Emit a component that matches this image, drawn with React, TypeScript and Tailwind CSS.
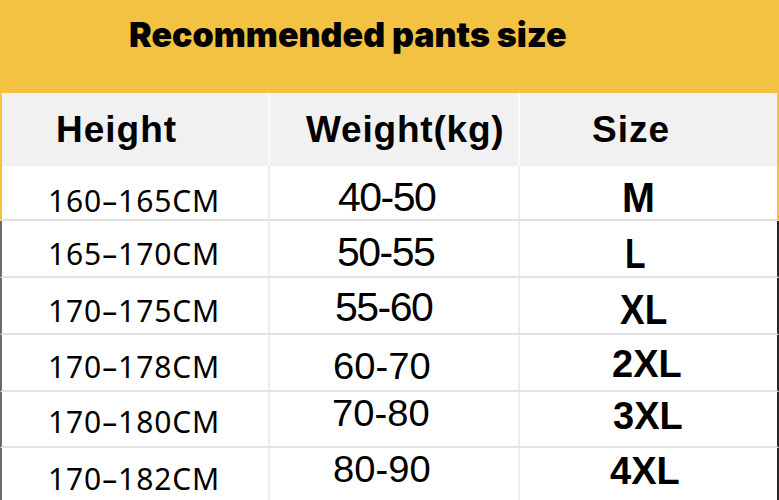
import React from "react";

type Row = {
  h: string;
  edge: string;
  c1: string;
  c1pt: string;
  c2pad: string;
  c2: string;
  c2cls: string;
  c3pad: string;
  c3: string;
  c3cls: string;
};

const rows: Row[] = [
  {
    h: "h-[55px]",
    edge: "border-l-2 border-r-2 border-l-[#f4c242] border-r-[#f4c242]",
    c1: "160–165CM",
    c1pt: "pt-[20px]",
    c2pad: "pl-[68px] pt-[11px]",
    c2: "40-50",
    c2cls: "text-[41px] tracking-[-1.5px]",
    c3pad: "pl-[102px] pt-[10px]",
    c3: "M",
    c3cls: "text-[43px] scale-x-[0.92]",
  },
  {
    h: "h-[57px]",
    edge: "border-l-2 border-r-2 border-l-[#6b6b6b] border-r-[#2a2a2a]",
    c1: "165–170CM",
    c1pt: "pt-[18px]",
    c2pad: "pl-[67px] pt-[11px]",
    c2: "50-55",
    c2cls: "text-[41px] tracking-[-1.5px]",
    c3pad: "pl-[105px] pt-[12px]",
    c3: "L",
    c3cls: "text-[42px] scale-x-[0.8]",
  },
  {
    h: "h-[57px]",
    edge: "border-l-2 border-r-2 border-l-[#6b6b6b] border-r-[#2a2a2a]",
    c1: "170–175CM",
    c1pt: "pt-[18px]",
    c2pad: "pl-[65px] pt-[9px]",
    c2: "55-60",
    c2cls: "text-[41px] tracking-[-1.5px]",
    c3pad: "pl-[100px] pt-[11px]",
    c3: "XL",
    c3cls: "text-[42px] scale-x-[0.88]",
  },
  {
    h: "h-[57px]",
    edge: "border-l-2 border-r-2 border-l-[#6b6b6b] border-r-[#2a2a2a]",
    c1: "170–178CM",
    c1pt: "pt-[17px]",
    c2pad: "pl-[63px] pt-[14px]",
    c2: "60-70",
    c2cls: "text-[36px] scale-x-[1.06]",
    c3pad: "pl-[92px] pt-[10px]",
    c3: "2XL",
    c3cls: "text-[38px]",
  },
  {
    h: "h-[56px]",
    edge: "border-l-2 border-r-2 border-l-[#6b6b6b] border-r-[#2a2a2a]",
    c1: "170–180CM",
    c1pt: "pt-[15px]",
    c2pad: "pl-[62px] pt-[4px]",
    c2: "70-80",
    c2cls: "text-[36px] scale-x-[1.06]",
    c3pad: "pl-[93px] pt-[5px]",
    c3: "3XL",
    c3cls: "text-[38px]",
  },
  {
    h: "h-[56px]",
    edge: "border-l-2 border-r-2 border-l-[#6b6b6b] border-r-[#2a2a2a]",
    c1: "170–182CM",
    c1pt: "pt-[16px]",
    c2pad: "pl-[63px] pt-[4px]",
    c2: "80-90",
    c2cls: "text-[36px] scale-x-[1.06]",
    c3pad: "pl-[90px] pt-[4px]",
    c3: "4XL",
    c3cls: "text-[38px]",
  },
];

export default function App() {
  return (
    <div className="w-[779px] h-[500px] overflow-hidden bg-[#f4c242] flex flex-col">
      <div className="h-[93px] shrink-0 pl-[129px] pt-[18px]">
        <div className="font-['Inter',sans-serif] font-black text-[34px] leading-none text-black">
          Recommended pants size
        </div>
      </div>

      <div className="flex flex-col">
        {/* header */}
        <div className="h-[73px] shrink-0 flex border-l-2 border-r-2 border-[#f4c242] bg-white">
          <div className="w-[268px] shrink-0 border-r-2 border-r-[#fafafa] bg-[#f1f1f1] rounded-tl-[4px] pl-[54px] pt-[18px]">
            <span className="font-['Liberation_Sans',Arial,sans-serif] font-bold text-[37px] leading-none tracking-[1px] text-black block">
              Height
            </span>
          </div>
          <div className="w-[250px] shrink-0 border-r-2 border-r-[#fafafa] bg-[#f1f1f1] pl-[36px] pt-[18px]">
            <span className="font-['Liberation_Sans',Arial,sans-serif] font-bold text-[37px] leading-none tracking-[0.8px] text-black block">
              Weight(kg)
            </span>
          </div>
          <div className="flex-1 bg-[#f1f1f1] rounded-tr-[4px] pl-[72px] pt-[18px]">
            <span className="font-['Liberation_Sans',Arial,sans-serif] font-bold text-[37px] leading-none tracking-[1px] text-black block">
              Size
            </span>
          </div>
        </div>

        {rows.map((r, i) => (
          <div
            key={i}
            className={`${r.h} shrink-0 flex bg-white border-b-2 border-b-[#e2e2e2] ${r.edge}`}
          >
            <div className={`w-[268px] shrink-0 border-r-2 border-r-[#ededed] pl-[46px] ${r.c1pt}`}>
              <span className="block font-['Noto_Sans',sans-serif] text-[30px] leading-none tracking-[0.9px] text-black">
                {r.c1}
              </span>
            </div>
            <div className={`w-[250px] shrink-0 border-r-2 border-r-[#ededed] ${r.c2pad}`}>
              <span
                className={`block origin-left font-['Liberation_Sans',Arial,sans-serif] leading-none text-black ${r.c2cls}`}
              >
                {r.c2}
              </span>
            </div>
            <div className={`flex-1 ${r.c3pad}`}>
              <span
                className={`block origin-left font-['Liberation_Sans',Arial,sans-serif] font-bold leading-none text-black ${r.c3cls}`}
              >
                {r.c3}
              </span>
            </div>
          </div>
        ))}
      </div>
    </div>
  );
}
